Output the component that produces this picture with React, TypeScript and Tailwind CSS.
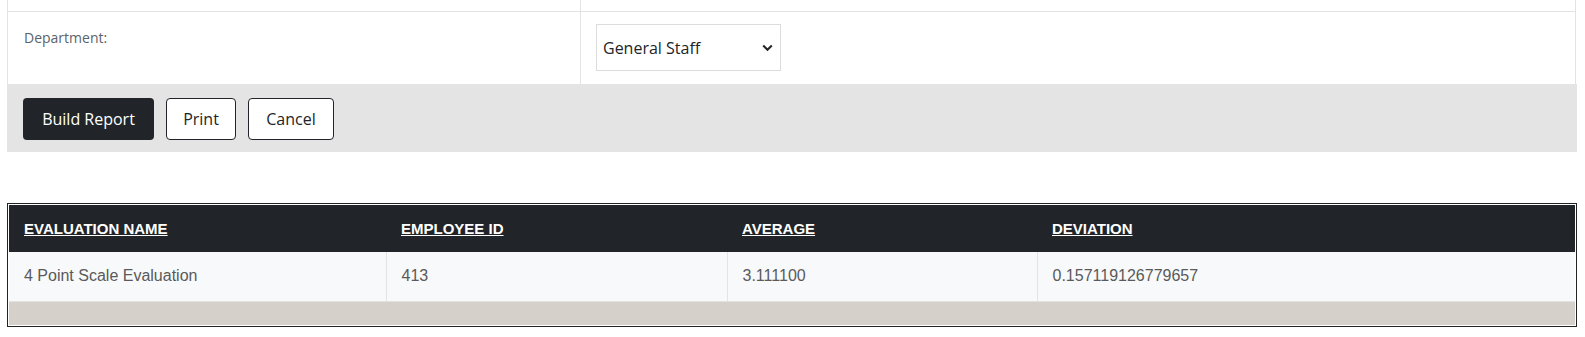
import React from "react";

const columns = [
  { key: "name", label: "EVALUATION NAME", width: "w-[377px]" },
  { key: "id", label: "EMPLOYEE ID", width: "w-[341px]" },
  { key: "avg", label: "AVERAGE", width: "w-[310px]" },
  { key: "dev", label: "DEVIATION", width: "" },
];

const rows = [
  { name: "4 Point Scale Evaluation", id: "413", avg: "3.111100", dev: "0.157119126779657" },
];

function ReportFilters() {
  return (
    <div className="mx-[7px] w-[1570px] font-['Open_Sans',sans-serif]">
      {/* Top (cut off) row */}
      <div className="flex h-[12px] border-x border-b border-[#e3e3e3] mr-px">
        <div className="w-[573px] border-r border-[#e3e3e3]" />
        <div className="flex-1" />
      </div>

      {/* Department row */}
      <div className="flex h-[72px] border-x border-[#e3e3e3] mr-px">
        <div className="w-[573px] border-r border-[#e3e3e3] pl-[16px] pt-[13px]">
          <span className="text-[14px] text-[#5c636a]">Department:</span>
        </div>
        <div className="flex-1 pl-[15px] pt-[12px]">
          <div className="relative w-[185px]">
            <select
              defaultValue="General Staff"
              className="appearance-none w-[185px] h-[47px] border border-[#dcdcdc] bg-white pl-[6px] text-[16px] text-[#212529] outline-none"
            >
              <option>General Staff</option>
              <option>Management</option>
            </select>
            <svg
              className="pointer-events-none absolute right-[8px] top-[20px]"
              width="11"
              height="8"
              viewBox="0 0 11 8"
              fill="none"
            >
              <path d="M1.2 1.5L5.5 5.8L9.8 1.5" stroke="#212529" strokeWidth="2" />
            </svg>
          </div>
        </div>
      </div>

      {/* Actions */}
      <div className="flex gap-[12px] bg-[#e4e4e4] px-[16px] pt-[14px] pb-[12px]">
        <button className="h-[42px] w-[131px] rounded-[4px] bg-[#212529] text-[16px] font-medium text-white">
          Build Report
        </button>
        <button className="h-[42px] w-[70px] rounded-[4px] border border-[#212529] bg-white text-[16px] text-[#212529]">
          Print
        </button>
        <button className="h-[42px] w-[86px] rounded-[4px] border border-[#212529] bg-white text-[16px] text-[#212529]">
          Cancel
        </button>
      </div>
    </div>
  );
}

function ReportTable() {
  return (
    <div className="mx-[7px] mt-[51px] w-[1570px] border border-[#222] p-px font-['Liberation_Sans',Arial,sans-serif]">
      <table className="w-full border-collapse">
        <thead>
          <tr className="h-[47px] bg-[#212529]">
            {columns.map((c) => (
              <th key={c.key} className={`${c.width} pl-[15px] text-left align-middle`}>
                <a href="#" className="text-[15px] font-bold text-white underline">
                  {c.label}
                </a>
              </th>
            ))}
          </tr>
        </thead>
        <tbody>
          {rows.map((r) => (
            <tr key={r.id} className="h-[49px] bg-[#f8f9fa] border-b border-[#e2e2e2]">
              <td className="pl-[15px] text-[16px] text-[#5a5a5a]">{r.name}</td>
              <td className="pl-[15px] text-[16px] text-[#5a5a5a] border-l border-[#e4e4e4]">{r.id}</td>
              <td className="pl-[15px] text-[16px] text-[#5a5a5a] border-l border-[#e4e4e4]">{r.avg}</td>
              <td className="pl-[15px] text-[16px] text-[#5a5a5a] border-l border-[#e4e4e4]">{r.dev}</td>
            </tr>
          ))}
          <tr className="h-[24px] bg-[#d5d1ca]">
            <td colSpan={4} />
          </tr>
        </tbody>
      </table>
    </div>
  );
}

export default function App() {
  return (
    <div className="w-[1585px] h-[337px] bg-white overflow-hidden">
      <ReportFilters />
      <ReportTable />
    </div>
  );
}
